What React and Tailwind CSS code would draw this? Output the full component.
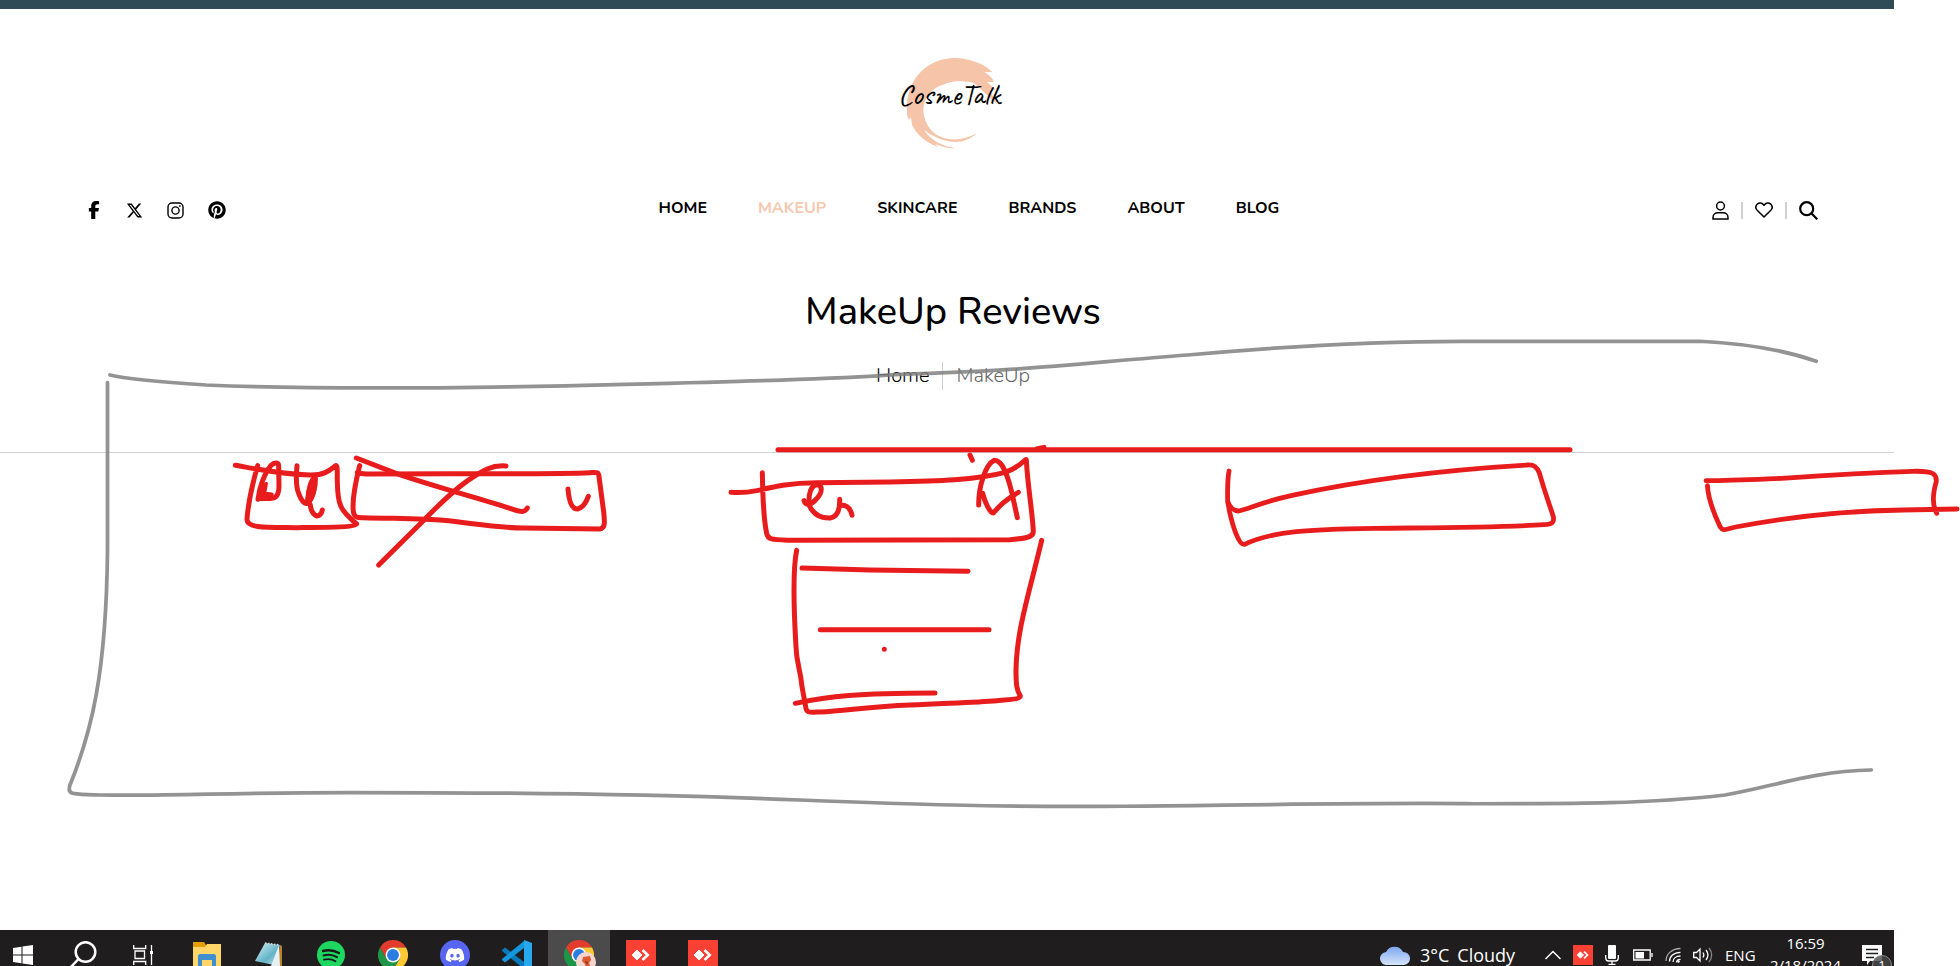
import React from "react";
import { FaFacebookF, FaXTwitter, FaPinterest, FaDiscord } from "react-icons/fa6";

const navItems = ["HOME", "MAKEUP", "SKINCARE", "BRANDS", "ABOUT", "BLOG"];

function Logo() {
  return (
    <a href="#home" className="relative flex h-24 w-28 items-center justify-center" aria-label="CosmeTalk">
      <svg className="h-24 w-28" viewBox="-3 0 112 96" fill="#f6c4a8" aria-hidden="true">
        <path d="M90 16 C84 10 68 4 55 4 C28 4 8 24 7 51 L7 61 L9 66 L11 63 L12 71 C18 83 28 89 38 93 L35 90 C43 93 49 95 55 94 C44 93 30 86 24 76 C40 88 62 94 77 79 C62 88 42 88 31 76 C18 60 22 38 42 31 L50 28 L42 31 C52 27 60 26 66 28 C76 26 80 36 86 40 L97 50 L92 41 L90 35 L96 36 L87 28 L94 28 C92 23 88 20 84 18 L92 18 Z" />
      </svg>
      <span className="absolute left-[52px] top-1/2 -translate-x-1/2 -translate-y-7 font-['Caveat','Lato',sans-serif] text-[30px] font-medium leading-10 text-black">CosmeTalk</span>
    </a>
  );
}

function InstagramIcon() {
  return (
    <svg className="size-[17px]" viewBox="0 0 17 17" fill="none" stroke="currentColor" strokeWidth="1.4">
      <rect x="1" y="1" width="15" height="15" rx="4" />
      <circle cx="8.5" cy="8.5" r="3.6" />
      <circle cx="12.9" cy="4.1" r=".5" fill="currentColor" strokeWidth=".8" />
    </svg>
  );
}

function Header() {
  return (
    <header className="flex flex-col items-center">
      <div className="flex w-full justify-center pb-[46px] pl-3 pt-[45px]">
        <Logo />
      </div>
      <div className="grid w-full grid-cols-[1fr_auto_1fr] items-center pl-[86px] pr-[76px]">
        <div className="flex items-center gap-6">
          <a href="#facebook" aria-label="Facebook" className="flex w-4 justify-center"><FaFacebookF className="size-[18px] shrink-0" /></a>
          <a href="#x" aria-label="X" className="flex w-4 justify-center"><FaXTwitter className="size-[17px] shrink-0" /></a>
          <a href="#instagram" aria-label="Instagram" className="flex w-[18px] justify-center"><InstagramIcon /></a>
          <a href="#pinterest" aria-label="Pinterest" className="flex w-[17px] justify-center"><FaPinterest className="size-[18px] shrink-0" /></a>
        </div>
        <nav className="flex gap-[51px] pb-1 pl-[34px] text-base font-bold leading-6">
          {navItems.map((t) => (
            <a key={t} href={"#" + t.toLowerCase()} className={t === "MAKEUP" ? "text-[#f6c8b0]" : "text-black"}>{t}</a>
          ))}
        </nav>
        <div className="flex items-center justify-end gap-3">
          <button aria-label="Account">
            <svg className="h-[19px] w-[17px]" viewBox="0 0 17 19" fill="none" stroke="currentColor" strokeWidth="1.5">
              <circle cx="8.5" cy="5" r="3.9" /><path d="M1 18v-1.5c0-3 2.3-4.8 4.8-4.8h5.4c2.500 0 4.800 1.800 4.800 4.800V18z" />
            </svg>
          </button>
          <span className="h-[17px] w-0.5 bg-[#d0d0d0]" />
          <button aria-label="Wishlist">
            <svg className="h-4 w-[18px]" viewBox="0 0 18 16" fill="none" stroke="currentColor" strokeWidth="1.5" strokeLinejoin="round">
              <path d="M9 3.300C7.200.5 4.200.2 2.300 2.100.5 4 .5 6.500 2.200 8.300L9 15l6.800-6.700c1.700-1.800 1.700-4.300-.1-6.200C13.800.2 10.800.5 9 3.300z" />
            </svg>
          </button>
          <span className="h-[17px] w-0.5 bg-[#d0d0d0]" />
          <button aria-label="Search">
            <svg className="size-[19px]" viewBox="0 0 19 19" fill="none" stroke="currentColor" strokeWidth="2.200">
              <circle cx="7.700" cy="7.700" r="6.500" /><path d="M12.300 12.300l6 6" />
            </svg>
          </button>
        </div>
      </div>
    </header>
  );
}

function Annotations() {
  return (
    <svg className="pointer-events-none absolute left-0 top-0 h-[966px] w-[1960px]" viewBox="0 0 1960 966" fill="none" strokeLinecap="round" strokeLinejoin="round" aria-hidden="true">
      <g transform="scale(1.25)" stroke="#808080" strokeOpacity=".85" strokeWidth="3">
        <path d="M88 300C100 303 120 305 165 308C260 312 400 310 500 307.500C600 305 660 303.500 720 299.500C820 297 870 290 950 284C1040 276 1110 273 1170 273L1360 273C1400 275 1430 281 1453 289" />
        <path d="M86 306L86 440C85 540 73 586 56 628C53 637 60 635 80 636C140 637 180 634 280 634C400 634 520 635 640 640C720 643 800 646 900 645C1000 644 1100 642 1180 643C1260 643 1320 643 1380 636C1420 629 1450 617 1497 616" />
      </g>
      <g transform="translate(220 430) scale(.33333)" stroke="#e81c1c" strokeWidth="15">
        <path d="M46 106C110 117 180 132 270 135C315 136 330 120 347 107C354 104 351 130 352 155C353 225 360 240 410 282C405 292 330 292 230 293C150 292 80 297 81 268C84 225 99 155 113 107" />
        <path d="M114 208C118 170 134 130 152 107C163 96 175 96 176 107L177 170C176 205 165 208 120 205" />
        <path fill="#e81c1c" strokeWidth="8" d="M114 208L122 165L140 160L135 188L157 192L154 206Z" />
        <path d="M231 107C228 140 227 170 236 190C246 217 255 223 263 220C280 205 286 170 286 145C275 140 266 180 263 210L271 225C272 240 280 255 291 258C300 257 305 250 307 240" />
        <path fill="#e81c1c" d="M264 210C265 180 274 148 285 145C286 170 279 200 264 214Z" />
        <path d="M419 107C407 155 396 210 400 245C404 265 415 263 430 263C540 266 620 266 670 271C760 280 820 293 910 294L1140 297C1158 295 1153 270 1151 245L1137 140C1136 125 1130 127 1110 128C1030 132 900 131 700 131L440 132C425 131 415 129 412 127" />
        <path d="M409 84L530 131C650 172 760 200 870 235C905 247 915 248 922 234" />
        <path d="M858 108C810 104 780 128 740 154C700 182 670 210 610 272L476 405" />
        <path d="M1044 177C1047 215 1055 238 1073 237C1090 233 1098 218 1105 199" />
      </g>
      <g transform="translate(710 430) scale(.33333)" stroke="#e81c1c" strokeWidth="15">
        <path d="M204 59L2580 59M980 57L1002 52M806 59L820 59" />
        <path d="M157 128C158 190 160 265 170 310C173 331 190 329 250 331L900 329C940 326 970 323 970 305C967 240 953 170 949 90C947 82 936 110 885 127C800 150 680 153 540 156L320 158C240 158 190 170 140 182C100 190 90 188 63 187" />
        <path d="M282 212C287 232 307 222 320 206C338 188 338 167 322 164C303 165 295 190 297 225C312 258 335 265 361 264C383 260 390 240 389 208M389 225C410 223 421 233 426 256" />
        <path d="M780 75L787 91M806 225C806 170 825 105 853 91C880 91 895 145 906 190L922 263M818 190C824 215 840 250 850 249C868 229 885 210 925 187" />
        <path d="M260 361C248 420 252 550 258 650C260 705 270 710 276 770L287 830C288 850 300 847 330 846C420 840 490 829 600 825C720 819 800 817 860 812C895 809 930 808 931 798C920 780 918 765 918 720C920 600 955 500 995 331" />
        <path d="M276 414L480 420L774 424M331 599L837 599M256 820C360 798 440 790 675 789M523 658L523 658" />
      </g>
      <g transform="translate(1200 430) scale(.48470 .33333)" stroke="#e81c1c" strokeWidth="4.800">
        <path vectorEffect="non-scaling-stroke" d="M60 123C56 150 57 180 57 214C62 235 72 243 80 243C105 235 130 215 190 196C350 145 500 120 675 105C690 103 695 112 700 128C710 180 719 215 729 260C731 278 727 283 710 284C600 294 480 293 360 295C230 298 150 302 92 343C80 347 68 290 61 245C59 230 58 220 57 214" />
        <path vectorEffect="non-scaling-stroke" d="M1044 152C1100 152 1150 148 1200 145C1290 136 1380 128 1470 124C1515 122 1520 133 1519 155C1513 185 1510 225 1520 250M1047 167C1048 200 1060 250 1073 290C1080 306 1084 297 1105 291C1220 259 1330 242 1450 240L1562 237" />
      </g>
    </svg>
  );
}

function ChromeIcon() {
  return (
    <svg className="size-[30px]" viewBox="0 0 48 48" aria-hidden="true">
      <path fill="#e33b2e" d="M3.200 12A24 24 0 0 1 44.800 12H24L13.600 30z" />
      <path fill="#fcc934" d="M44.800 12A24 24 0 0 1 24 48L34.400 30L24 12z" />
      <path fill="#1e9648" d="M24 48A24 24 0 0 1 3.200 12L13.600 30H34.400z" />
      <circle cx="24" cy="24" r="12" fill="#fff" /><circle cx="24" cy="24" r="9.500" fill="#2a7de1" />
    </svg>
  );
}

function AnyDesk({ className }) {
  return (
    <svg className={className} viewBox="0 0 30 30" aria-hidden="true">
      <path fill="#fb4134" d="M0 0h30v30H0z" />
      <path fill="#fff" stroke="#fff" strokeLinejoin="round" d="M11 10l5 5-5 5-5-5z" />
      <path fill="none" stroke="#fff" strokeWidth="2.600" d="M16.500 10l5.200 5-5.200 5" />
    </svg>
  );
}

const apps = [
  { name: "Search", icon: (
    <svg className="size-7" viewBox="0 0 28 28" fill="none" stroke="#fff" strokeWidth="2.500"><circle cx="16.500" cy="11" r="9.800" /><path d="M9.500 18L1 27" /></svg>
  ) },
  { name: "Task View", icon: (
    <svg className="-ml-1 size-5" viewBox="0 0 20 20" fill="none" stroke="#fff" strokeWidth="1.300"><path d="M.7 0v3.500h12V0M.7 20v-3.500h12V20M2 6h9.500v7.500H2zM18.500 0v20" /><path fill="#fff" stroke="none" d="M17 6h3v3h-3z" /></svg>
  ) },
  { name: "File Explorer", icon: (
    <svg className="h-7 w-7" viewBox="0 0 28 28"><path fill="#e3a008" d="M0 1h11l2 3v4H0z" /><path fill="#ffd667" d="M0 6h12l2-3h14v22H0z" /><path fill="#3f8fd0" d="M5 28V15c0-1 1-2 2-2h14c1 0 2 1 2 2v13h-4v-9H9v9z" /></svg>
  ) },
  { name: "Notepad", icon: (
    <svg className="size-7" viewBox="0 0 28 28"><defs><linearGradient id="note" x1="0" y1="0" x2="1" y2="1"><stop stopColor="#d9f0f5" /><stop offset=".6" stopColor="#63b3c7" /><stop offset="1" stopColor="#c9e4ea" /></linearGradient></defs><path fill="#b9832d" d="M25 4l2 1v20l-5 1z" /><path fill="url(#note)" d="M10 2l15 2-6 20L0 20z" /><path fill="#e7eff4" d="M24 4l1 22-9-1z" /><path stroke="#ddd" strokeWidth="1.500" strokeDasharray="1.500 1.500" d="M10 2l15 2" /></svg>
  ) },
  { name: "Spotify", icon: (
    <svg className="size-7" viewBox="0 0 28 28" fill="none" stroke="#181818" strokeLinecap="round"><circle cx="14" cy="14" r="14" fill="#1ed760" stroke="none" /><path strokeWidth="2.400" d="M6 10c6-1.500 11-.7 16 2" /><path strokeWidth="2" d="M6.500 14.500c5-1.300 9.500-.7 13.500 1.700" /><path strokeWidth="1.800" d="M7 18.700c4.500-1 8-.6 11.500 1.500" /></svg>
  ) },
  { name: "Chrome", icon: <ChromeIcon /> },
  { name: "Discord", icon: <span className="flex size-[30px] items-center justify-center rounded-full bg-[#5865f2]"><FaDiscord className="size-5 text-white" /></span> },
  { name: "Visual Studio Code", icon: (
    <svg className="size-[30px]" viewBox="0 0 30 30"><path fill="#0879bd" d="M0 10l3-2.500L22 22v7L0 11z" /><path fill="#1597dc" d="M0 20l3 2.500L22 8V1L0 19z" /><path fill="#28a9ef" d="M22 0l8 3v24l-8 3z" /></svg>
  ) },
  { name: "Chrome profile", active: true, icon: (
    <span className="relative"><ChromeIcon />
      <svg className="absolute -right-0.5 top-3 size-5" viewBox="0 0 20 20"><circle cx="10" cy="10" r="10" fill="#f7d5cf" /><path fill="#dc5a2c" d="M7 5l7-1 1 4-2 3 2 5-5 2-1-6-3-3z" /><path fill="#8d351e" d="M9 9l3 1-1 3z" /></svg>
    </span>
  ) },
  { name: "AnyDesk", icon: <AnyDesk className="size-[30px]" /> },
  { name: "AnyDesk session", icon: <AnyDesk className="size-[30px]" /> },
];

function Taskbar() {
  return (
    <footer className="mr-[66px] h-9 shrink-0 overflow-hidden bg-[#1f1d1e] font-['Segoe_UI','Open_Sans',sans-serif] text-white">
      <div className="flex h-[50px] items-center justify-between">
        <div className="flex h-full">
          <button aria-label="Start" className="flex w-[52px] items-center justify-center pr-1.5">
            <svg className="size-5" viewBox="0 0 20 20" fill="#fff"><path d="M0 3l8.500-1.200v7.700H0zM9.500 1.600L20 0v9.500H9.500zM0 10.500h8.500v7.700L0 17zM9.500 10.500H20V20L9.500 18.400z" /></svg>
          </button>
          {apps.map((a) => (
            <button key={a.name} aria-label={a.name} className={"flex w-[62px] items-center justify-center " + (a.active ? "bg-[#4c4b4b]" : "")}>{a.icon}</button>
          ))}
        </div>
        <div className="flex h-full items-center pr-3">
          <svg className="mr-2.5 h-5 w-[30px]" viewBox="0 0 30 20"><defs><linearGradient id="cloud" x1="0" y1="0" x2="0" y2="1"><stop stopColor="#7ea6ee" /><stop offset="1" stopColor="#d5e5fa" /></linearGradient></defs><path fill="url(#cloud)" d="M7 20a6.500 6.500 0 0 1-1-13A9.500 9.500 0 0 1 23 7a6.500 6.500 0 0 1 1 13z" /></svg>
          <div className="flex w-[125px] gap-2 text-[18px] leading-6"><span>3°C</span><span>Cloudy</span></div>
          <svg className="mr-3 h-5 w-4" viewBox="0 0 16 20" fill="none" stroke="#fff" strokeWidth="1.500"><path d="M.5 14L8 6.500l7.500 7.500" /></svg>
          <AnyDesk className="mr-3 size-5" />
          <svg className="mr-3.5 h-5 w-[14px]" viewBox="0 0 14 20" fill="none" stroke="#fff" strokeWidth="1.300"><rect x="3" y="0" width="8" height="14" rx="1" fill="#fff" stroke="none" /><path d="M.7 10v3c0 2 1 3 3 3h6.600c2 0 3-1 3-3v-3M7 16v3.500M3.500 19.300h7" /></svg>
          <svg className="mr-3 h-5 w-5" viewBox="0 0 20 20" fill="none" stroke="#fff" strokeWidth="1.300"><path d="M.7 5h16.500v10H.7zM19 8v4" /><path fill="#fff" stroke="none" d="M2.500 7H11v6.500H2.500z" /></svg>
          <svg className="mr-3 h-5 w-4" viewBox="0 0 16 20" fill="none" stroke="#fff" strokeWidth="1.300"><path stroke="#aaa" d="M1 16C1 9 7 3.500 15.500 3.500" /><path d="M4.500 16.500c0-5 4-9.200 11-9.200M8 17c0-3.500 3-6 7.500-6M11.500 17.500c0-2 1.500-3.200 4-3.200" /><circle cx="13.500" cy="16.500" r="1.200" fill="#fff" stroke="none" /></svg>
          <svg className="mr-3 h-5 w-5" viewBox="0 0 20 20" fill="none" stroke="#fff" strokeWidth="1.300"><path d="M.7 7.500h2.800L7 4v12l-3.500-3.500H.7zM10 7.500c1 1.500 1 3.500 0 5M13 5c2.300 3 2.300 7 0 10" /><path stroke="#888" d="M16 3c3.500 4 3.500 10 0 14" /></svg>
          <span className="w-[47px] text-[15px] leading-5">ENG</span>
          <div className="w-[67px] self-start pt-[3px] text-center text-[15px] leading-5"><div>16:59</div><div className="-mx-2 pt-0.5">2/18/2024</div></div>
          <button aria-label="1 notification" className="relative ml-[23px]">
            <svg className="size-5" viewBox="0 0 20 20"><path fill="#fff" d="M0 0h20v16H8l-3 4v-4H0z" /><path stroke="#1f1d1e" strokeWidth="1.300" d="M4 4.500h12M4 8.500h12M4 12.500h8" /></svg>
            <span className="absolute left-2.5 top-2.5 size-5 rounded-full border border-[#888] bg-[#4a4a4a]/80 text-center text-[13px] leading-[18px]">1</span>
          </button>
        </div>
      </div>
    </footer>
  );
}

export default function App() {
  return (
    <div className="relative flex min-h-screen flex-col overflow-hidden bg-white font-['Nunito','Lato',sans-serif] text-black">
      <div className="mr-[66px] h-[9px] bg-[#2f4b57]" />
      <div className="mr-[66px] flex-1">
        <Header />
        <section className="flex flex-col items-center border-b border-[#d2d2d2] pb-[62px] pl-3 pt-[62px]">
          <h1 className="text-[38px] font-medium leading-[52px]">MakeUp Reviews</h1>
          <div className="mt-6 flex h-7 items-center text-xl font-light">
            <a href="#home" className="pr-3">Home</a>
            <span className="h-7 w-px bg-[#cfcfcf]" />
            <span className="pl-3.5 text-[#666]">MakeUp</span>
          </div>
        </section>
      </div>
      <Taskbar />
      <Annotations />
    </div>
  );
}
